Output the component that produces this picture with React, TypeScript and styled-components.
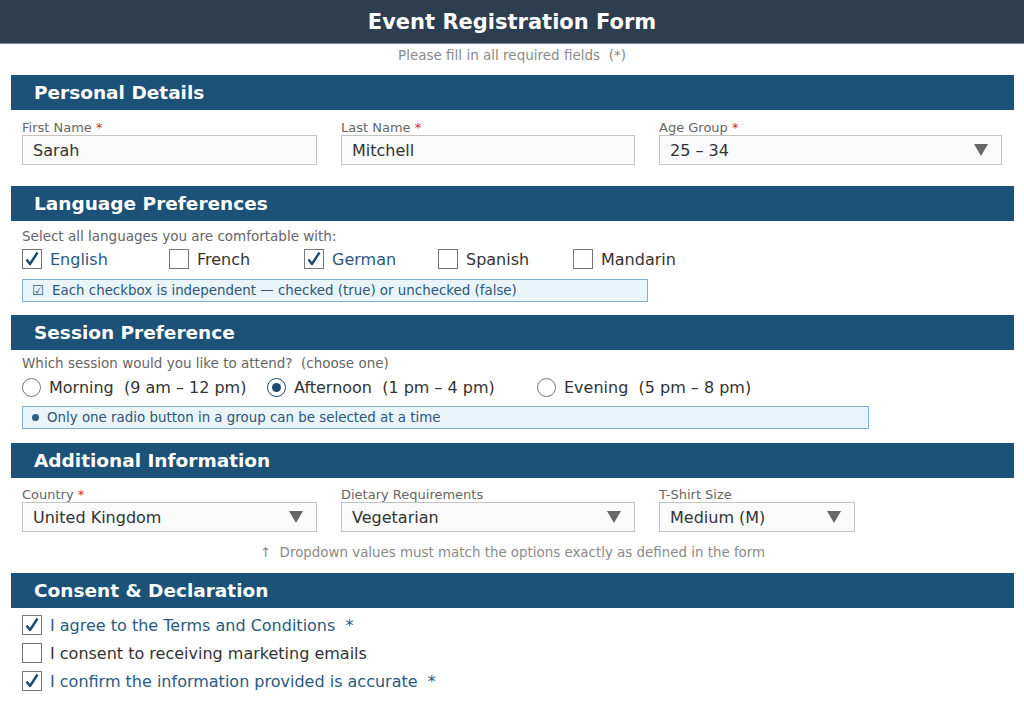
import styled, { createGlobalStyle } from "styled-components";

const GlobalStyle = createGlobalStyle`
  html, body {
    margin: 0;
    padding: 0;
    background: #fff;
    font-family: "DejaVu Sans", Verdana, sans-serif;
  }
`;

const Page = styled.div`
  width: 1024px;
  height: 705px;
  overflow: hidden;
  background: #fff;
`;

const TopBar = styled.header`
  height: 43px;
  background: #2c3e50;
  border-bottom: 1px solid #7f8c99;
  display: flex;
  align-items: center;
  justify-content: center;
  color: #fff;
  font-size: 21px;
  font-weight: bold;
`;

const Subtitle = styled.div`
  text-align: center;
  color: #8a8a8a;
  font-size: 13.5px;
  margin-top: 3px;
  height: 28px;
`;

const Section = styled.section<{ $top?: number }>`
  margin: ${(p) => p.$top || 0}px 10px 0 11px;
`;

const SectionBar = styled.h2`
  margin: 0;
  height: 35px;
  background: #1c5178;
  color: #fff;
  font-size: 18.5px;
  font-weight: bold;
  display: flex;
  align-items: center;
  padding-left: 23px;
`;

const Body = styled.div<{ $pad?: string }>`
  padding: ${(p) => p.$pad || "9px 11px 21px"};
`;

const FieldRow = styled.div`
  display: flex;
  gap: 24px;
`;

const Field = styled.div<{ $w: number }>`
  width: ${(p) => p.$w}px;
  display: flex;
  flex-direction: column;
`;

const Label = styled.label`
  font-size: 13px;
  color: #666;
  line-height: 15px;
  height: 15px;
  white-space: pre;
`;

const Star = styled.span`
  color: #d62c2c;
`;

const Box = styled.div`
  height: 28px;
  border: 1px solid #c4c4c4;
  background: #fafafa;
  display: flex;
  align-items: center;
  padding: 0 10px;
  font-size: 16px;
  color: #333;
`;

const Value = styled.span`
  flex: 1;
`;

const Arrow = styled.span`
  width: 0;
  height: 0;
  border-left: 7px solid transparent;
  border-right: 7px solid transparent;
  border-top: 12px solid #666;
  margin-right: 3px;
`;

const Hint = styled.div<{ $gap: number }>`
  font-size: 13.5px;
  color: #666;
  line-height: 15px;
  margin-bottom: ${(p) => p.$gap}px;
  white-space: pre;
`;

const ChoiceRow = styled.div<{ $cols: string }>`
  display: grid;
  grid-template-columns: ${(p) => p.$cols};
  align-items: center;
  height: 28px;
`;

const Choice = styled.div<{ $on?: boolean }>`
  display: flex;
  align-items: center;
  gap: 8px;
  font-size: 16px;
  color: ${(p) => (p.$on ? "#2a5a80" : "#333")};
  white-space: pre;
`;

const Square = styled.span`
  width: 18px;
  height: 18px;
  border: 1px solid #777;
  background: #fff;
  display: flex;
  align-items: center;
  justify-content: center;
  flex: none;
`;

const Circle = styled.span<{ $on?: boolean }>`
  width: 17px;
  height: 17px;
  border-radius: 50%;
  border: 1px solid ${(p) => (p.$on ? "#1c4a6e" : "#777")};
  background: #fff;
  display: flex;
  align-items: center;
  justify-content: center;
  flex: none;
  &::after {
    content: "";
    display: ${(p) => (p.$on ? "block" : "none")};
    width: 9px;
    height: 9px;
    border-radius: 50%;
    background: #1c4a6e;
  }
`;

const InfoBox = styled.div<{ $w: number; $top: number }>`
  width: ${(p) => p.$w}px;
  box-sizing: border-box;
  height: 23px;
  margin-top: ${(p) => p.$top}px;
  background: #eaf4fb;
  border: 1px solid #7fb0d3;
  color: #2c5678;
  font-size: 13.4px;
  display: flex;
  align-items: center;
  gap: 8px;
  padding-left: 9px;
`;

const Dot = styled.span`
  width: 7px;
  height: 7px;
  border-radius: 50%;
  background: #2c5f86;
  flex: none;
`;

const Note = styled.div`
  text-align: center;
  font-size: 13.4px;
  color: #8a8a8a;
  margin-top: 13px;
  white-space: pre;
`;

const ConsentList = styled.div`
  display: flex;
  flex-direction: column;
  padding: 3px 11px 0;
`;

const ConsentItem = styled(Choice)`
  height: 28px;
`;

function Check() {
  return (
    <svg width="16" height="16" viewBox="0 0 16 16">
      <path
        d="M2.5 8.5 L6 13 L13.5 1.5"
        fill="none"
        stroke="#1c4a6e"
        strokeWidth="2.4"
        strokeLinejoin="round"
      />
    </svg>
  );
}

function CheckBox({ label, on }: { label: string; on?: boolean }) {
  return (
    <Choice $on={on}>
      <Square>{on && <Check />}</Square>
      {label}
    </Choice>
  );
}

function Radio({ label, on }: { label: string; on?: boolean }) {
  return (
    <Choice>
      <Circle $on={on} />
      {label}
    </Choice>
  );
}

function Input({ label, value, req, w, select }: { label: string; value: string; req?: boolean; w: number; select?: boolean }) {
  return (
    <Field $w={w}>
      <Label>
        {label}
        {req && <Star> *</Star>}
      </Label>
      <Box>
        <Value>{value}</Value>
        {select && <Arrow />}
      </Box>
    </Field>
  );
}

const languages = [
  { label: "English", on: true },
  { label: "French" },
  { label: "German", on: true },
  { label: "Spanish" },
  { label: "Mandarin" },
];

const consents = [
  { label: "I agree to the Terms and Conditions  *", on: true },
  { label: "I consent to receiving marketing emails" },
  { label: "I confirm the information provided is accurate  *", on: true },
];

export default function App() {
  return (
    <Page>
      <GlobalStyle />
      <TopBar>Event Registration Form</TopBar>
      <Subtitle>Please fill in all required fields&nbsp; (*)</Subtitle>

      <Section>
        <SectionBar>Personal Details</SectionBar>
        <Body $pad="10px 11px 21px">
          <FieldRow>
            <Input label="First Name" value="Sarah" req w={295} />
            <Input label="Last Name" value="Mitchell" req w={294} />
            <Input label="Age Group" value="25 – 34" req w={343} select />
          </FieldRow>
        </Body>
      </Section>

      <Section>
        <SectionBar>Language Preferences</SectionBar>
        <Body $pad="8px 11px 13px">
          <Hint $gap={1}>Select all languages you are comfortable with:</Hint>
          <ChoiceRow $cols="147px 135px 134px 135px auto">
            {languages.map((l) => (
              <CheckBox key={l.label} label={l.label} on={l.on} />
            ))}
          </ChoiceRow>
          <InfoBox $w={626} $top={6}>
            <span>☑</span>Each checkbox is independent — checked (true) or unchecked (false)
          </InfoBox>
        </Body>
      </Section>

      <Section>
        <SectionBar>Session Preference</SectionBar>
        <Body $pad="6px 11px 14px">
          <Hint $gap={2}>Which session would you like to attend?  (choose one)</Hint>
          <ChoiceRow $cols="245px 270px auto">
            <Radio label="Morning  (9 am – 12 pm)" />
            <Radio label="Afternoon  (1 pm – 4 pm)" on />
            <Radio label="Evening  (5 pm – 8 pm)" />
          </ChoiceRow>
          <InfoBox $w={847} $top={5}>
            <Dot />Only one radio button in a group can be selected at a time
          </InfoBox>
        </Body>
      </Section>

      <Section>
        <SectionBar>Additional Information</SectionBar>
        <Body $pad="9px 11px 0">
          <FieldRow>
            <Input label="Country" value="United Kingdom" req w={295} select />
            <Input label="Dietary Requirements" value="Vegetarian" w={294} select />
            <Input label="T-Shirt Size" value="Medium (M)" w={196} select />
          </FieldRow>
        </Body>
        <Note>↑  Dropdown values must match the options exactly as defined in the form</Note>
      </Section>

      <Section $top={13}>
        <SectionBar>Consent &amp; Declaration</SectionBar>
        <ConsentList>
          {consents.map((c) => (
            <ConsentItem key={c.label} $on={c.on}>
              <Square>{c.on && <Check />}</Square>
              {c.label}
            </ConsentItem>
          ))}
        </ConsentList>
      </Section>
    </Page>
  );
}
